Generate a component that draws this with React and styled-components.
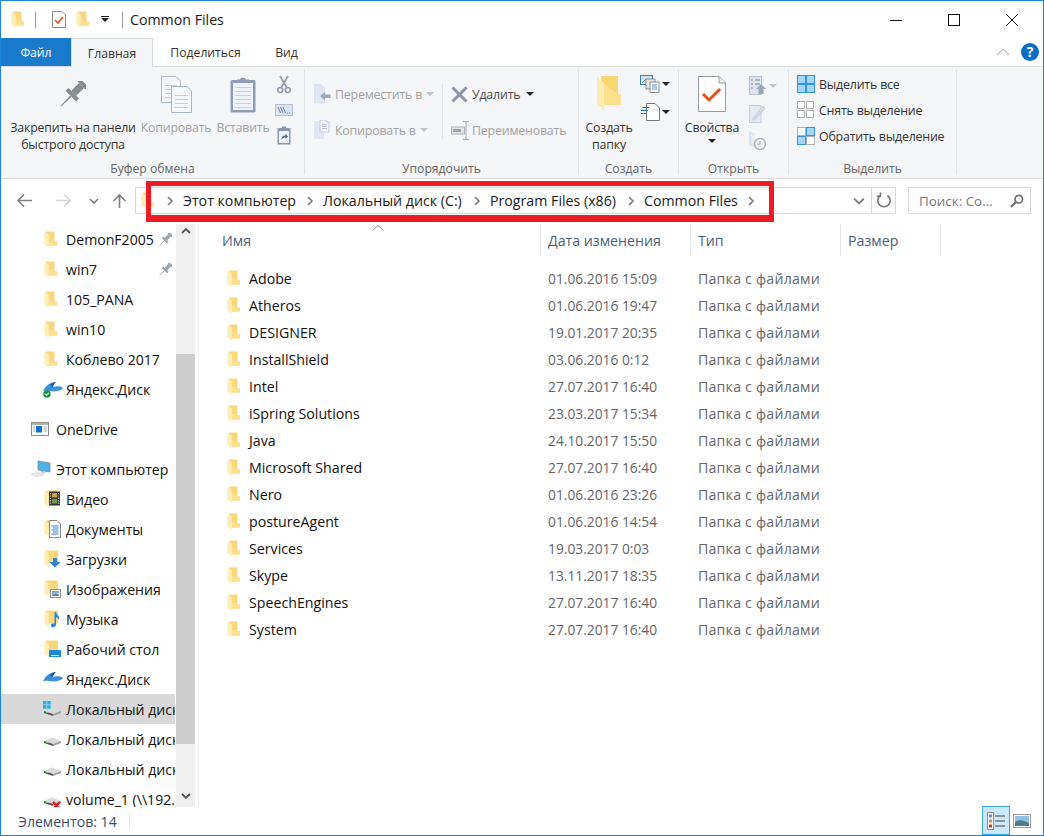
import React from "react";
import styled, { createGlobalStyle } from "styled-components";

const Global = createGlobalStyle`
  html, body { margin: 0; padding: 0; background: #fff; }
  body { font-family: "Open Sans", "Noto Sans", "Liberation Sans", sans-serif; font-size: 14px; }
  * { box-sizing: border-box; }
`;

const Window = styled.div`
  position: relative; width: 1044px; height: 836px; overflow: hidden;
  border: 1px solid #1a86d9; background: #fff; display: flex; flex-direction: column; color: #111;
`;
const TitleBar = styled.div`display: flex; align-items: center; height: 37px; flex: none;`;
const QuickSlot = styled.div`display: flex; justify-content: center; align-items: center; width: ${p => p.$w}px; margin-left: ${p => p.$ml || 0}px; flex: none;`;
const QuickSep = styled.div`width: 1px; height: 16px; background: #9b9b9b; margin-left: ${p => p.$ml}px; flex: none;`;
const TitleText = styled.div`margin-left: 7px; width: 100px; white-space: nowrap; color: #1a1a1a; font-size: 14.2px;`;
const WinControls = styled.div`margin-left: auto; display: flex; padding-right: 2px;`;
const WinBtn = styled.div`width: 58px; height: 37px; display: flex; align-items: center; justify-content: center;`;

const TabRow = styled.div`display: flex; height: 29px; flex: none; align-items: stretch; border-bottom: 1px solid #dadbdc;`;
const FileTab = styled.div`width: 70px; background: #1979ca; color: #fff; display: flex; align-items: center; justify-content: center; font-size: 12.2px;`;
const Tab = styled.div`
  width: ${p => p.$w}px; display: flex; align-items: center; justify-content: center; color: #333; font-size: 12.2px;
  ${p => p.$active && `background: #f5f6f7; border: 1px solid #dadbdc; border-bottom: none; margin-bottom: -1px;`}
`;
const TabTools = styled.div`margin-left: auto; display: flex; align-items: center; gap: 11px; padding-right: 4px; padding-bottom: 1px;`;
const Help = styled.div`width: 18px; height: 18px; border-radius: 50%; background: #0b6fc9; color: #fff; font: bold 14px/18px "Open Sans", sans-serif; text-align: center;`;

const Ribbon = styled.div`display: flex; height: 112px; flex: none; background: #f5f6f7; border-bottom: 1px solid #dadbdc;`;
const Group = styled.div`width: ${p => p.$w}px; margin: 2px 0 3px; border-right: 1px solid #e2e3e4; display: flex; flex-direction: column; flex: none;`;
const GroupBody = styled.div`flex: 1; display: flex; padding-left: ${p => p.$pl || 0}px; min-height: 0;`;
const GroupLabel = styled.div`height: 14px; line-height: 16px; text-align: center; color: #666; font-size: 12.2px; white-space: nowrap;`;
const BigButton = styled.div`
  width: ${p => p.$w}px; margin-left: ${p => p.$ml || 0}px; display: flex; flex-direction: column; align-items: center; flex: none;
  color: ${p => p.$off ? "#a3a3a3" : "#333"}; font-size: 12.4px; letter-spacing: -0.2px; line-height: 17px; text-align: center;
`;
const BigIcon = styled.div`height: 50px; display: flex; align-items: center; justify-content: center; flex: none;`;
const Caret = styled.div`
  width: 0; height: 0; border-left: ${p => p.$s || 4}px solid transparent; border-right: ${p => p.$s || 4}px solid transparent;
  border-top: ${p => p.$s || 4}px solid ${p => p.$off ? "#c4c4c4" : "#222"}; flex: none; margin-left: ${p => p.$ml || 0}px; margin-top: ${p => p.$mt || 0}px;
`;
const SmallStack = styled.div`
  width: ${p => p.$w}px; margin-left: ${p => p.$ml || 0}px; height: ${p => p.$h}px; padding-top: ${p => p.$pt}px; flex: none;
  display: flex; flex-direction: column; justify-content: space-between; align-items: ${p => p.$align || "center"};
`;
const IconCaret = styled.div`display: flex; align-items: center; gap: ${p => p.$gap || 2}px;`;
const ActionCol = styled.div`width: ${p => p.$w}px; padding-top: 7px; flex: none;`;
const ActionRow = styled.div`display: flex; align-items: center; height: 36px; white-space: nowrap; font-size: 12.4px; letter-spacing: -0.2px; color: ${p => p.$off ? "#a3a3a3" : "#4a4a4a"};`;
const ActionIcon = styled.div`width: 21px; flex: none; display: flex;`;
const ColSep = styled.div`width: 1px; height: 55px; margin: 15px 8px 0 0; background: #dfe0e1; flex: none;`;
const SelectCol = styled.div`padding: 2px 0 0 8px;`;
const SelectRow = styled.div`display: flex; align-items: center; gap: 4px; height: 26px; white-space: nowrap; color: #333; font-size: 12.4px; letter-spacing: -0.2px;`;

const AddressRow = styled.div`height: 45px; flex: none; padding-top: 8px; display: flex; align-items: flex-start;`;
const NavBtns = styled.div`display: flex; width: 134px; height: 27px; flex: none;`;
const NavBtn = styled.div`width: ${p => p.$w}px; display: flex; align-items: center; justify-content: center; flex: none;`;
const AddressBox = styled.div`width: 761px; height: 27px; flex: none; border: 1px solid #d9d9d9; display: flex; align-items: center; padding-left: 5px;`;
const Crumb = styled.div`display: flex; align-items: center; gap: 8px; margin-left: ${p => p.$ml}px; flex: none;`;
const CrumbText = styled.div`width: ${p => p.$w}px; white-space: nowrap; color: #1a1a1a; font-size: 14.2px;`;
const AddressEnd = styled.div`margin-left: auto; display: flex; align-items: center; height: 100%;`;
const Drop = styled.div`width: 24px; display: flex; justify-content: center;`;
const Refresh = styled.div`width: 24px; height: 100%; border-left: 1px solid #d9d9d9; display: flex; align-items: center; justify-content: center;`;
const SearchBox = styled.div`
  width: 123px; height: 27px; margin-left: 12px; border: 1px solid #d9d9d9; display: flex; align-items: center;
  justify-content: space-between; padding: 0 6px 0 10px; color: #777; font-size: 13.4px; white-space: nowrap; flex: none;
`;

const Main = styled.div`flex: 1; min-height: 0; display: flex;`;
const NavPane = styled.div`width: 175px; flex: none; overflow: hidden; padding-right: 1px;`;
const NavRow = styled.div`
  height: 30px; display: flex; align-items: center; overflow: hidden; white-space: nowrap; flex: none;
  padding-left: ${p => p.$lvl === 1 ? 30 : 42}px; margin-top: ${p => p.$gap ? 10 : 0}px; color: #111; font-size: 14.1px;
  background: ${p => p.$active ? "#d9d9d9" : "transparent"};
`;
const NavIconBox = styled.div`width: 20px; flex: none; margin-right: ${p => p.$lvl === 1 ? 5 : 3}px; display: flex;`;
const FolderOffset = styled.div`padding: 1px 0 0 1px; display: flex;`;
const NavText = styled.div`flex: none;`;
const PinBox = styled.div`margin-left: auto; padding-right: 3px; display: flex; flex: none; padding-left: 2px;`;
const ScrollBar = styled.div`width: 19px; flex: none; background: #f0f0f0; display: flex; flex-direction: column; align-items: center;`;
const ScrollArrow = styled.div`
  height: ${p => p.$h}px; width: 100%; display: flex; justify-content: center; flex: none;
  align-items: ${p => p.$end ? "flex-end" : "flex-start"}; padding: ${p => p.$end ? "0 0 6px" : "2px 0 0"};
`;
const ScrollThumb = styled.div`width: 100%; height: 390px; background: #cdcdcd; flex: none;`;
const PaneLine = styled.div`width: 1px; margin-left: 3px; background: #f0f0f0; flex: none;`;
const ListPane = styled.div`flex: 1; min-width: 0;`;
const HeaderRow = styled.div`display: grid; grid-template-columns: 342px 150px 150px 100px; height: 33px;`;
const HeaderCell = styled.div`
  position: relative; border-right: 1px solid #e5e5e5; height: 32px; padding-left: ${p => p.$pl || 7}px; padding-top: 7px;
  color: #4c607a; font-size: 14.2px;
`;
const SortArrow = styled.div`position: absolute; left: 173px; top: 1px; display: flex;`;
const FileList = styled.div`padding-top: 8px;`;
const FileRow = styled.div`display: grid; grid-template-columns: 342px 150px 150px 100px; height: 27px; align-items: center;`;
const NameCell = styled.div`display: flex; align-items: center; padding-left: 28px; gap: 9px; color: #111; font-size: 14.2px;`;
const MetaCell = styled.div`padding-left: 7px; color: #666; white-space: nowrap; font-size: ${p => p.$type ? 14.2 : 13.8}px; letter-spacing: ${p => p.$type ? 0.2 : 0}px;`;

const StatusBar = styled.div`height: 28px; flex: none; display: flex; align-items: center; padding-left: 17px; color: #3c4f68; font-size: 14.1px;`;
const StatusText = styled.div`width: 111px; white-space: nowrap;`;
const StatusSep = styled.div`width: 1px; height: 14px; background: #e5e5e5;`;
const ViewBtns = styled.div`margin-left: auto; display: flex; align-items: center; height: 100%; padding-right: 9px;`;
const ViewBtn = styled.div`
  width: ${p => p.$active ? 28 : 24}px; height: 29px; margin-top: -1px; display: flex; align-items: center; justify-content: center;
  ${p => p.$active && `background: #cce8ff; border: 1px solid #3aa3e6;`}
`;
const RedFrame = styled.div`
  position: absolute; left: 145px; top: 180px; width: 628px; height: 41px; pointer-events: none;
  border: 5px solid #ed1c24; border-bottom-width: 7px;
`;

/* ---------- icons ---------- */
const Folder = ({ w = 13, h = 17 }) => (
  <svg width={w} height={h} viewBox="0 0 13 17">
    <path d="M2 0.5H10.5V10.5H13V14.5H4.5Z" fill="#f9d87c" />
    <path d="M4.5 8L10.5 10.5H13V14.5H4.5Z" fill="#fbe08f" />
    <path d="M0.3 0.7L4.8 3.6V17L0.3 13.6Z" fill="#fdeeb9" />
  </svg>
);
const BigFolder = () => (
  <svg width="24" height="36" viewBox="0 0 24 36">
    <path d="M4 0H21V18H23.5V29H7Z" fill="#f9d872" />
    <path d="M7 8L21 18H23.5V29H7Z" fill="#fbe08e" />
    <path d="M0 0.5L7 7V35L0 27.5Z" fill="#fdecb2" />
  </svg>
);
const CheckDoc = ({ size = 36 }) => (
  <svg width={size * 0.78} height={size} viewBox="0 0 28 36">
    <path d="M.5.5H21L27.5 7V35.5H.5Z" fill="#fff" stroke="#9a9a9a" />
    <path d="M21 .5V7H27.5" fill="#eee" stroke="#9a9a9a" />
    <path d="M5 18L11 24L22 13" fill="none" stroke="#e8501c" strokeWidth="3" />
  </svg>
);
const QuickDoc = () => (
  <svg width="14" height="17" viewBox="0 0 14 17">
    <path d="M.5.5H10L13.5 4V16.5H.5Z" fill="#fff" stroke="#8c8c8c" />
    <path d="M3 9L6 12L11 6" fill="none" stroke="#e8501c" strokeWidth="1.6" />
  </svg>
);
const Pin = ({ size = 26, c = "#848d94" }) => (
  <svg width={size} height={size} viewBox="0 0 26 26">
    <g transform="rotate(45 13 13)" fill={c}>
      <rect x="7.5" y="-3" width="11" height="4" rx="1" />
      <rect x="9.5" y="1" width="7" height="11" />
      <path d="M5.5 12H20.5V16H5.5Z" />
      <path d="M12 16H14L13.4 30H12.6Z" />
    </g>
  </svg>
);
const Sheet = ({ x, y, w, h }) => (
  <g>
    <path d={`M${x + .5} ${y + .5}H${x + w - 5}L${x + w - .5} ${y + 5}V${y + h - .5}H${x + .5}Z`} fill="#f5f7fb" stroke="#aab6cc" />
    {[9, 13, 17, 21, 25].filter(v => v < h - 2).map(v => <path key={v} d={`M${x + 4} ${y + v + .5}H${x + w - 4}`} stroke="#c2cde0" />)}
  </g>
);
const CopyBig = () => (
  <svg width="31" height="37" viewBox="0 0 31 37">
    <Sheet x={0} y={0} w={20} h={27} />
    <Sheet x={10} y={10} w={21} h={27} />
  </svg>
);
const PasteBig = () => (
  <svg width="26" height="37" viewBox="0 0 26 37">
    <rect x=".5" y="4" width="25" height="32.5" rx="1.5" fill="#8f9db4" />
    <rect x="3" y="7" width="20" height="27" fill="#eef2f9" />
    {[11, 15, 19, 23, 27, 31].map(v => <path key={v} d={`M5 ${v}.5H21`} stroke="#c6d1e3" />)}
    <path d="M10 3.5C10 1 16 1 16 3.5H19V7H7V3.5Z" fill="#8f9db4" />
  </svg>
);
const Scissors = () => (
  <svg width="14" height="19" viewBox="0 0 14 19" fill="none" stroke="#8f9bae" strokeWidth="1.6">
    <path d="M3 1L9.5 12M11 1L4.5 12" />
    <circle cx="3.2" cy="15" r="2.5" />
    <circle cx="10.8" cy="15" r="2.5" />
  </svg>
);
const PathChip = () => (
  <svg width="18" height="12" viewBox="0 0 18 12">
    <rect x=".5" y=".5" width="17" height="11" fill="#dbe4f3" stroke="#b5c1d6" />
    <path d="M3 3L5.5 9M5.5 3L8 9M8 3L10.5 9" stroke="#6e7b90" fill="none" />
    <path d="M12 9h1M14 9h1" stroke="#6e7b90" />
  </svg>
);
const ClipLink = () => (
  <svg width="14" height="19" viewBox="0 0 14 19">
    <rect x=".5" y="2" width="13" height="16.5" fill="#8b99b0" />
    <rect x="2" y="5" width="10" height="12" fill="#eef2f9" />
    <path d="M5 0.5H9V3H5Z" fill="#8b99b0" />
    <path d="M4.5 14C4.5 10.5 6 9.5 8.5 9.5V7.8L11 10.5L8.5 13V11.5C7 11.5 5.5 12 4.5 14Z" fill="#5a6a82" />
  </svg>
);
const MoveTo = () => (
  <svg width="17" height="20" viewBox="0 0 17 20">
    <path d="M0 0H6L11 4V19H0Z" fill="#dfe7f3" stroke="#cfd8e6" strokeWidth=".5" />
    <path d="M6 12L11 8V10.5H16.5V14H11V16.5Z" fill="#9ca8ba" />
  </svg>
);
const CopyTo = () => (
  <svg width="17" height="20" viewBox="0 0 17 20">
    <path d="M0 1H10V19H0Z" fill="#dfe7f3" />
    <path d="M6 0H12V2H15V12H6Z" fill="#f4f6fa" stroke="#b7c1d1" strokeWidth=".8" />
    <path d="M8 4.5H13M8 6.5H13M8 8.5H13" stroke="#b7c1d1" />
  </svg>
);
const DeleteX = () => (
  <svg width="17" height="17" viewBox="0 0 17 17">
    <path d="M1.5 1.5L15.5 15.5M15.5 1.5L1.5 15.5" stroke="#8b97a8" strokeWidth="3" />
  </svg>
);
const Rename = () => (
  <svg width="19" height="19" viewBox="0 0 19 19">
    <rect x=".5" y="6" width="13" height="7" fill="#dfe4ea" stroke="#aeb4bb" />
    <rect x="2" y="8" width="8" height="3" fill="#9aa2ac" />
    <path d="M12 .5H18M15 .5V18.5M12 18.5H18" stroke="#a3a9b0" fill="none" />
  </svg>
);
const NewItems = () => (
  <svg width="20" height="18" viewBox="0 0 20 18">
    <rect x=".5" y=".5" width="12" height="9" fill="#cfe3f4" stroke="#3b82b9" />
    <path d="M2 8L6 4L9 7" stroke="#7c9a6a" fill="none" />
    <rect x="6" y="4" width="9" height="10" fill="#e7e7e7" stroke="#777" strokeWidth=".8" />
    <rect x="10" y="7" width="9" height="10.5" fill="#fff" stroke="#777" strokeWidth=".8" />
    <path d="M12 10H17M12 12H17M12 14H17" stroke="#5a93c7" />
  </svg>
);
const EasyNew = () => (
  <svg width="20" height="18" viewBox="0 0 20 18">
    <path d="M6.5 .5H15L19.5 5V17.5H6.5Z" fill="#fff" stroke="#777" />
    <path d="M1 7.5H8M2.5 4.5H9M1 10.5H6" stroke="#1e73c4" strokeWidth="1.2" />
  </svg>
);
const OpenTool = () => (
  <svg width="17" height="19" viewBox="0 0 17 19">
    <rect x=".5" y=".5" width="12" height="18" fill="#dde4ee" stroke="#bac4d2" />
    <path d="M2 4H4M2 8H4M2 12H4M6 4H11M6 8H11" stroke="#98a4b5" strokeWidth="1.5" />
    <path d="M12 8L17 13H14.5V18H9.5V13H7Z" fill="#99a6b8" />
  </svg>
);
const EditTool = () => (
  <svg width="17" height="19" viewBox="0 0 17 19">
    <path d="M.5 1.5H12V18.5H.5Z" fill="#e6ebf3" stroke="#c4cdda" />
    <path d="M4 14L14 2L16.5 4L6 15.5L3 16Z" fill="#d3dbe6" stroke="#bcc6d4" strokeWidth=".6" />
  </svg>
);
const HistoryTool = () => (
  <svg width="17" height="20" viewBox="0 0 17 20">
    <path d="M0 0L6 3V17L0 14Z" fill="#dde5f0" />
    <path d="M2 3H6V13H2Z" fill="#e8edf4" />
    <circle cx="11" cy="13" r="5.5" fill="#eef1f5" stroke="#a9b2bf" strokeWidth="1.4" />
    <path d="M11 10V13.2H8.5" stroke="#a0a9b6" fill="none" />
  </svg>
);
const Tiles = ({ kind }) => {
  const on = { fill: "#a8d6fb", stroke: "#2f97e8" };
  const off = { fill: "#fff", stroke: "#b0b0b0" };
  const cells = kind === "all" ? [on, on, on, on] : kind === "none" ? [off, off, off, off] : [off, on, on, off];
  const coords = [[.5, .5], [9.5, .5], [.5, 9.5], [9.5, 9.5]];
  return (
    <svg width="18" height="18" viewBox="0 0 18 18">
      {cells.map((c, i) => <rect key={i} x={coords[i][0]} y={coords[i][1]} width={kind === "none" ? 7 : 8} height={kind === "none" ? 7 : 8} {...c} />)}
    </svg>
  );
};
const Chevron = ({ dir = "right", c = "#7a7a7a", size = 10, sw = 1.6 }) => {
  const d = { right: "M3 1L7 5L3 9", down: "M1 3L5 7L9 3", up: "M1 7L5 3L9 7" }[dir];
  return <svg width={size} height={size} viewBox="0 0 10 10"><path d={d} fill="none" stroke={c} strokeWidth={sw} /></svg>;
};
const Arrow = ({ c, dir }) => (
  <svg width="17" height="15" viewBox="0 0 17 15" fill="none" stroke={c} strokeWidth="1.7">
    {dir === "left" && <path d="M16 7.5H2M8 1.5L2 7.5L8 13.5" />}
    {dir === "right" && <path d="M1 7.5H15M9 1.5L15 7.5L9 13.5" />}
    {dir === "up" && <path d="M8.5 15V2M2.5 8L8.5 2L14.5 8" />}
  </svg>
);
const RefreshIcon = () => (
  <svg width="16" height="17" viewBox="0 0 16 17" fill="none" stroke="#777" strokeWidth="1.6">
    <path d="M11.5 3.5A6.2 6.2 0 1 1 4.5 3.5" />
    <path d="M4.5 .5V4.2H.8" />
  </svg>
);
const SearchIcon = () => (
  <svg width="14" height="14" viewBox="0 0 14 14" fill="none" stroke="#6f6f6f" strokeWidth="1.7">
    <circle cx="8.8" cy="5.2" r="3.8" />
    <path d="M6 8L1 13" strokeWidth="2.2" />
  </svg>
);
const Drive = ({ win, x }) => (
  <svg width="20" height="20" viewBox="1 0 20 20">
    <path d="M2 12L10 8.5L19 12L11 15Z" fill="#d9d9d9" />
    <path d="M2 12L11 15V17L2 14Z" fill="#555" />
    <path d="M11 15L19 12V14L11 17Z" fill="#9e9e9e" />
    <path d="M4 13.5H6" stroke="#6c6" />
    {win && <g fill="#19b4ee"><rect x="1" y="2" width="3.5" height="3.5" /><rect x="5.2" y="2" width="3.5" height="3.5" /><rect x="1" y="6.2" width="3.5" height="3.5" /><rect x="5.2" y="6.2" width="3.5" height="3.5" /></g>}
    {x && <path d="M11 13L18 20M18 13L11 20" stroke="#d81e1e" strokeWidth="2.4" />}
  </svg>
);
const YandexDisk = ({ ok }) => (
  <svg width="20" height="20" viewBox="0 0 20 20">
    <path d="M0 12C3 6 8 3 13 3C11 5 10 6 10 8C14 7 18 7 20 9C18 12 12 13 7 12C4 11.5 2 11.5 0 12Z" fill="#3c8fe0" />
    <path d="M7 5.5C9 4 11 3 13 3C11 5 10 6 10 8C8.5 8 7.5 7 7 5.5Z" fill="#1d5fae" />
    {ok && <circle cx="4" cy="15" r="3.7" fill="#17963a" />}
    {ok && <path d="M2.3 15L3.6 16.3L5.8 13.8" stroke="#fff" fill="none" strokeWidth="1.1" />}
  </svg>
);
const OneDriveIcon = () => (
  <svg width="18" height="14" viewBox="0 0 18 14">
    <rect x=".5" y=".5" width="17" height="13" fill="#fff" stroke="#8c8c8c" />
    <path d="M1 1H17V3H1Z" fill="#b5b5b5" />
    <rect x="5" y="4" width="6" height="6.5" fill="#0a72cf" />
    <path d="M12.5 5H16M12.5 7H16M12.5 9H16M2 5H4M2 7H4M2 9H4" stroke="#a9a9a9" />
  </svg>
);
const Computer = () => (
  <svg width="20" height="18" viewBox="0 0 20 18">
    <path d="M7 1L19 3V12L7 10Z" fill="#4fb1e8" stroke="#6e8796" strokeWidth=".7" />
    <path d="M10 11L14 12V13L10 12.5Z" fill="#b0b8bf" />
    <path d="M0 14L7 12.5L13 14.5L6 17Z" fill="#e4e7ea" stroke="#c4c9cd" strokeWidth=".5" />
  </svg>
);
const SpecialFolder = ({ kind }) => (
  <svg width="20" height="20" viewBox="0 0 20 20">
    <g transform="translate(1 1.5)">
      <path d="M2 0H14V13H4.5Z" fill="#f9d87c" />
      <path d="M0.3 0.2L4.8 3.1V16.5L0.3 13.1Z" fill="#fdeeb9" />
    </g>
    {kind === "video" && <g><rect x="6" y="2.5" width="11" height="14" fill="#333" /><rect x="9" y="4" width="5" height="4.5" fill="#c9a24a" /><rect x="9" y="10" width="5" height="4.5" fill="#6f9a46" /><path d="M7.5 4V16M15.5 4V16" stroke="#ddd" strokeDasharray="1.2 1.2" strokeWidth="1.2" /></g>}
    {kind === "docs" && <g><path d="M6.5 1.5H14L17.5 5V18.5H6.5Z" fill="#fff" stroke="#888" /><path d="M8.5 7H15.5M10 9H15.5M8.5 11H15.5M10 13H15.5M8.5 15H15.5" stroke="#2377c4" strokeWidth=".9" /></g>}
    {kind === "down" && <path d="M10 9H14V13H17.5L12 18.5L6.5 13H10Z" fill="#2f85d2" />}
    {kind === "pics" && <g><rect x="7.5" y="10.5" width="10" height="8" fill="#fff" stroke="#8d8d8d" /><path d="M9 12H16V14.5L13 13.5L9 16Z" fill="#7fa9c9" /><path d="M9 16L13 14L16 15.5V17H9Z" fill="#5f8a9e" /></g>}
    {kind === "music" && <path d="M11.5 3H13C13.3 6 17.5 7 16 11.5C15.8 9.5 14.5 8.5 13 8.2V15.5C13 17.5 11 18.7 9.3 18.2C7.5 17.7 7.5 15.4 9.3 14.6C10 14.3 11 14.3 11.5 14.7Z" fill="#2588dc" />}
    {kind === "desk" && <g><rect x="6" y="11" width="12" height="7" rx=".5" fill="#1d86d8" /><path d="M8 16.5H16" stroke="#cde6fa" /></g>}
  </svg>
);
const DetailsView = () => (
  <svg width="18" height="18" viewBox="0 0 18 18">
    <rect x=".5" y=".5" width="6" height="17" fill="#fff" stroke="#8d8d8d" />
    <rect x="2" y="2.5" width="3" height="3" fill="#5a93c7" />
    <rect x="2" y="7.5" width="3" height="3" fill="#c29a45" />
    <rect x="2" y="12.5" width="3" height="3" fill="#c0392b" />
    <path d="M8 4H18M8 9H18M8 14H18" stroke="#7b7b7b" strokeWidth="1.3" />
  </svg>
);
const PreviewView = () => (
  <svg width="18" height="14" viewBox="0 0 18 14">
    <rect x=".5" y=".5" width="17" height="13" fill="#fff" stroke="#9b9b9b" strokeWidth="1" />
    <rect x="2" y="2" width="14" height="10" fill="#8fc0e6" />
    <path d="M2 8C6 5 10 6 16 9V12H2Z" fill="#4f7f84" />
  </svg>
);
const PlainFolder = () => <FolderOffset><Folder /></FolderOffset>;

/* ---------- data ---------- */
const navItems = [
  { t: "DemonF2005", pin: true }, { t: "win7", pin: true }, { t: "105_PANA" }, { t: "win10" }, { t: "Коблево 2017" },
  { t: "Яндекс.Диск", icon: <YandexDisk ok /> },
  { t: "OneDrive", lvl: 1, gap: true, icon: <OneDriveIcon /> },
  { t: "Этот компьютер", lvl: 1, gap: true, icon: <Computer /> },
  { t: "Видео", icon: <SpecialFolder kind="video" /> },
  { t: "Документы", icon: <SpecialFolder kind="docs" /> },
  { t: "Загрузки", icon: <SpecialFolder kind="down" /> },
  { t: "Изображения", icon: <SpecialFolder kind="pics" /> },
  { t: "Музыка", icon: <SpecialFolder kind="music" /> },
  { t: "Рабочий стол", icon: <SpecialFolder kind="desk" /> },
  { t: "Яндекс.Диск", icon: <YandexDisk /> },
  { t: "Локальный диск (C:)", active: true, icon: <Drive win /> },
  { t: "Локальный диск (D:)", icon: <Drive /> },
  { t: "Локальный диск (E:)", icon: <Drive /> },
  { t: "volume_1 (\\\\192.168.1.1)", icon: <Drive x /> },
];
const files = [
  ["Adobe", "01.06.2016 15:09"], ["Atheros", "01.06.2016 19:47"], ["DESIGNER", "19.01.2017 20:35"],
  ["InstallShield", "03.06.2016 0:12"], ["Intel", "27.07.2017 16:40"], ["iSpring Solutions", "23.03.2017 15:34"],
  ["Java", "24.10.2017 15:50"], ["Microsoft Shared", "27.07.2017 16:40"], ["Nero", "01.06.2016 23:26"],
  ["postureAgent", "01.06.2016 14:54"], ["Services", "19.03.2017 0:03"], ["Skype", "13.11.2017 18:35"],
  ["SpeechEngines", "27.07.2017 16:40"], ["System", "27.07.2017 16:40"],
];
const crumbs = [["Этот компьютер", 113, 11], ["Локальный диск (C:)", 140, 9], ["Program Files (x86)", 127, 9], ["Common Files", 94, 9]];

export default function App() {
  return (
    <Window>
      <Global />
      <TitleBar>
        <QuickSlot $w={13} $ml={10}><Folder /></QuickSlot>
        <QuickSep $ml={11} />
        <QuickSlot $w={14} $ml={16}><QuickDoc /></QuickSlot>
        <QuickSlot $w={13} $ml={10}><Folder /></QuickSlot>
        <QuickSlot $w={8} $ml={12}>
          <svg width="8" height="7" viewBox="0 0 8 7"><path d="M0 2H8L4 6Z M0 0H8V1H0Z" fill="#222" /></svg>
        </QuickSlot>
        <QuickSep $ml={13} />
        <TitleText>Common Files</TitleText>
        <WinControls>
          <WinBtn><svg width="12" height="12" viewBox="0 0 12 12"><path d="M0 6.5H12" stroke="#111" /></svg></WinBtn>
          <WinBtn><svg width="12" height="12" viewBox="0 0 12 12"><rect x=".5" y=".5" width="11" height="11" fill="none" stroke="#111" /></svg></WinBtn>
          <WinBtn><svg width="12" height="12" viewBox="0 0 12 12"><path d="M0 0L12 12M12 0L0 12" stroke="#111" /></svg></WinBtn>
        </WinControls>
      </TitleBar>

      <TabRow>
        <FileTab>Файл</FileTab>
        <Tab $w={82} $active>Главная</Tab>
        <Tab $w={105}>Поделиться</Tab>
        <Tab $w={57}>Вид</Tab>
        <TabTools>
          <svg width="14" height="8" viewBox="0 0 14 8"><path d="M1 7L7 1L13 7" fill="none" stroke="#bdbdbd" strokeWidth="1.2" /></svg>
          <Help>?</Help>
        </TabTools>
      </TabRow>

      <Ribbon>
        <Group $w={304}>
          <GroupBody $pl={7}>
            <BigButton $w={130}><BigIcon><Pin /></BigIcon>Закрепить на панели быстрого доступа</BigButton>
            <BigButton $w={72} $ml={2} $off><BigIcon><CopyBig /></BigIcon>Копировать</BigButton>
            <BigButton $w={52} $ml={5} $off><BigIcon><PasteBig /></BigIcon>Вставить</BigButton>
            <SmallStack $w={24} $ml={3} $h={76} $pt={6}><Scissors /><PathChip /><ClipLink /></SmallStack>
          </GroupBody>
          <GroupLabel>Буфер обмена</GroupLabel>
        </Group>
        <Group $w={274}>
          <GroupBody $pl={9}>
            <ActionCol $w={128}>
              <ActionRow $off><ActionIcon><MoveTo /></ActionIcon>Переместить в<Caret $off $ml={4} /></ActionRow>
              <ActionRow $off><ActionIcon><CopyTo /></ActionIcon>Копировать в<Caret $off $ml={4} /></ActionRow>
            </ActionCol>
            <ColSep />
            <ActionCol $w={125}>
              <ActionRow><ActionIcon><DeleteX /></ActionIcon>Удалить<Caret $ml={6} /></ActionRow>
              <ActionRow $off><ActionIcon><Rename /></ActionIcon>Переименовать</ActionRow>
            </ActionCol>
          </GroupBody>
          <GroupLabel>Упорядочить</GroupLabel>
        </Group>
        <Group $w={100}>
          <GroupBody $pl={6}>
            <BigButton $w={48}><BigIcon><BigFolder /></BigIcon>Создать папку</BigButton>
            <SmallStack $w={30} $ml={7} $h={52} $pt={6} $align="flex-start">
              <IconCaret><NewItems /><Caret /></IconCaret>
              <IconCaret><EasyNew /><Caret /></IconCaret>
            </SmallStack>
          </GroupBody>
          <GroupLabel>Создать</GroupLabel>
        </Group>
        <Group $w={110}>
          <GroupBody $pl={5}>
            <BigButton $w={56}>
              <BigIcon><CheckDoc /></BigIcon>Свойства<Caret $mt={3} />
            </BigButton>
            <SmallStack $w={30} $ml={9} $h={82} $pt={7} $align="flex-start">
              <IconCaret $gap={3}><OpenTool /><Caret $off /></IconCaret>
              <EditTool />
              <HistoryTool />
            </SmallStack>
          </GroupBody>
          <GroupLabel>Открыть</GroupLabel>
        </Group>
        <Group $w={168}>
          <GroupBody>
            <SelectCol>
              <SelectRow><Tiles kind="all" />Выделить все</SelectRow>
              <SelectRow><Tiles kind="none" />Снять выделение</SelectRow>
              <SelectRow><Tiles kind="invert" />Обратить выделение</SelectRow>
            </SelectCol>
          </GroupBody>
          <GroupLabel>Выделить</GroupLabel>
        </Group>
      </Ribbon>

      <AddressRow>
        <NavBtns>
          <NavBtn $w={46}><Arrow dir="left" c="#808080" /></NavBtn>
          <NavBtn $w={32}><Arrow dir="right" c="#d5d5d5" /></NavBtn>
          <NavBtn $w={30}><Chevron dir="down" c="#808080" /></NavBtn>
          <NavBtn $w={20}><Arrow dir="up" c="#808080" /></NavBtn>
        </NavBtns>
        <AddressBox>
          <Folder />
          {crumbs.map(([t, w, ml]) => (
            <Crumb key={t} $ml={ml}>
              <Chevron />
              <CrumbText $w={w}>{t}</CrumbText>
            </Crumb>
          ))}
          <Crumb $ml={8}><Chevron /></Crumb>
          <AddressEnd>
            <Drop><Chevron dir="down" size={12} /></Drop>
            <Refresh><RefreshIcon /></Refresh>
          </AddressEnd>
        </AddressBox>
        <SearchBox>Поиск: Со...<SearchIcon /></SearchBox>
      </AddressRow>

      <Main>
        <NavPane>
          {navItems.map((n, i) => (
            <NavRow key={i} $lvl={n.lvl} $gap={n.gap} $active={n.active}>
              <NavIconBox $lvl={n.lvl}>{n.icon || <PlainFolder />}</NavIconBox>
              <NavText>{n.t}</NavText>
              {n.pin && <PinBox><Pin size={13} c="#9aa3ab" /></PinBox>}
            </NavRow>
          ))}
        </NavPane>
        <ScrollBar>
          <ScrollArrow $h={130}><Chevron dir="up" c="#555" sw={1.8} /></ScrollArrow>
          <ScrollThumb />
          <ScrollArrow $h={63} $end><Chevron dir="down" c="#555" sw={1.8} /></ScrollArrow>
        </ScrollBar>
        <PaneLine />
        <ListPane>
          <HeaderRow>
            <HeaderCell $pl={23}>
              Имя
              <SortArrow><svg width="12" height="6" viewBox="0 0 12 6"><path d="M.5 5.5L6 .5L11.5 5.5" fill="none" stroke="#8a8a8a" /></svg></SortArrow>
            </HeaderCell>
            <HeaderCell>Дата изменения</HeaderCell>
            <HeaderCell>Тип</HeaderCell>
            <HeaderCell>Размер</HeaderCell>
          </HeaderRow>
          <FileList>
            {files.map(([n, d]) => (
              <FileRow key={n}>
                <NameCell><Folder />{n}</NameCell>
                <MetaCell>{d}</MetaCell>
                <MetaCell $type>Папка с файлами</MetaCell>
              </FileRow>
            ))}
          </FileList>
        </ListPane>
      </Main>

      <StatusBar>
        <StatusText>Элементов: 14</StatusText>
        <StatusSep />
        <ViewBtns>
          <ViewBtn $active><DetailsView /></ViewBtn>
          <ViewBtn><PreviewView /></ViewBtn>
        </ViewBtns>
      </StatusBar>

      <RedFrame />
    </Window>
  );
}
